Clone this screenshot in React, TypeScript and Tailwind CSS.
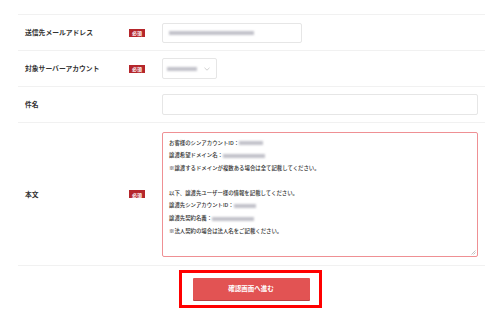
const font = { fontFamily: '"Noto Sans CJK JP", "Noto Sans", sans-serif' };

function Badge() {
  return (
    <span className="inline-flex h-[8px] w-[16px] items-center justify-center bg-[#b5262b] text-[5px] font-bold leading-none text-white">
      必須
    </span>
  );
}

function Blur({ w, tone = "bg-[#c2c2ca]" }: { w: string; tone?: string }) {
  return <span className={`inline-block h-[4px] align-middle blur-[0.8px] ${w} ${tone}`} />;
}

function Row({
  label,
  required,
  className,
  children,
}: {
  label: string;
  required?: boolean;
  className: string;
  children: React.ReactNode;
}) {
  return (
    <div className={`flex items-center border-b border-[#f1f1f1] ${className}`}>
      <div className="w-[111px] pl-[7px] text-[6.8px] font-bold text-[#333]">{label}</div>
      <div className="flex w-[33px] items-center">{required ? <Badge /> : null}</div>
      <div className="flex-1">{children}</div>
    </div>
  );
}

const mark = "\u203B\uFE0E";

export default function App() {
  const lines: (React.ReactNode | null)[] = [
    <>
      お客様のシンアカウントID：<Blur w="w-[24px]" />
    </>,
    <>
      譲渡希望ドメイン名：<Blur w="w-[42px]" />
    </>,
    <>{mark}譲渡するドメインが複数ある場合は全て記載してください。</>,
    null,
    <>以下、譲渡先ユーザー様の情報を記載してください。</>,
    <>
      譲渡先シンアカウントID：<Blur w="w-[22px]" />
    </>,
    <>
      譲渡先契約名義：<Blur w="w-[42px]" />
    </>,
    <>{mark}法人契約の場合は法人名をご記載ください。</>,
  ];

  return (
    <div className="h-[314px] w-[500px] overflow-hidden bg-white" style={font}>
      <div className="ml-[18px] mt-[14px] w-[467px] border-t border-[#f1f1f1]">
        <Row label="送信先メールアドレス" required className="h-[36px]">
          <div className="flex h-[20px] w-[140px] items-center rounded-[2px] border border-[#e6e6e6] px-[6px]">
            <Blur w="w-[85px]" />
          </div>
        </Row>
        <Row label="対象サーバーアカウント" required className="h-[36px]">
          <div className="flex h-[21px] w-[55px] items-center justify-between rounded-[2px] border border-[#e6e6e6] pl-[4px] pr-[6px]">
            <Blur w="w-[30px]" />
            <svg width="6" height="4" viewBox="0 0 6 4" fill="none">
              <path d="M0.5 0.8 3 3.2 5.5 0.8" stroke="#c4c4c4" strokeWidth="0.8" />
            </svg>
          </div>
        </Row>
        <Row label="件名" className="h-[36px]">
          <div className="h-[21px] w-[316px] rounded-[2px] border border-[#e6e6e6]" />
        </Row>
        <Row label="本文" required className="h-[143px]">
          <div className="relative h-[125px] w-[316px] rounded-[2px] border-[1.5px] border-[#ef9094] px-[6px] pt-[4px]">
            {lines.map((l, i) => (
              <div key={i} className="h-[12.6px] text-[5.4px] font-medium leading-[12.6px] text-[#333]">
                {l}
              </div>
            ))}
            <svg className="absolute bottom-[1px] right-[1px]" width="5" height="5" viewBox="0 0 5 5">
              <path d="M4.5 0.5 0.5 4.5M4.5 2.5 2.5 4.5" stroke="#a9a9a9" strokeWidth="0.7" />
            </svg>
          </div>
        </Row>
      </div>
      <div className="mt-[4px] flex justify-center">
        <div className="border-[3px] border-[#ff0000] pb-[5px] pl-[11px] pr-[9px] pt-[5px]">
          <button
            type="button"
            className="flex h-[22px] w-[117px] items-center justify-center rounded-[1px] bg-[#e25353] text-[6.5px] font-bold text-white shadow-[0_1px_0_#b84040]"
          >
            確認画面へ進む
          </button>
        </div>
      </div>
    </div>
  );
}
